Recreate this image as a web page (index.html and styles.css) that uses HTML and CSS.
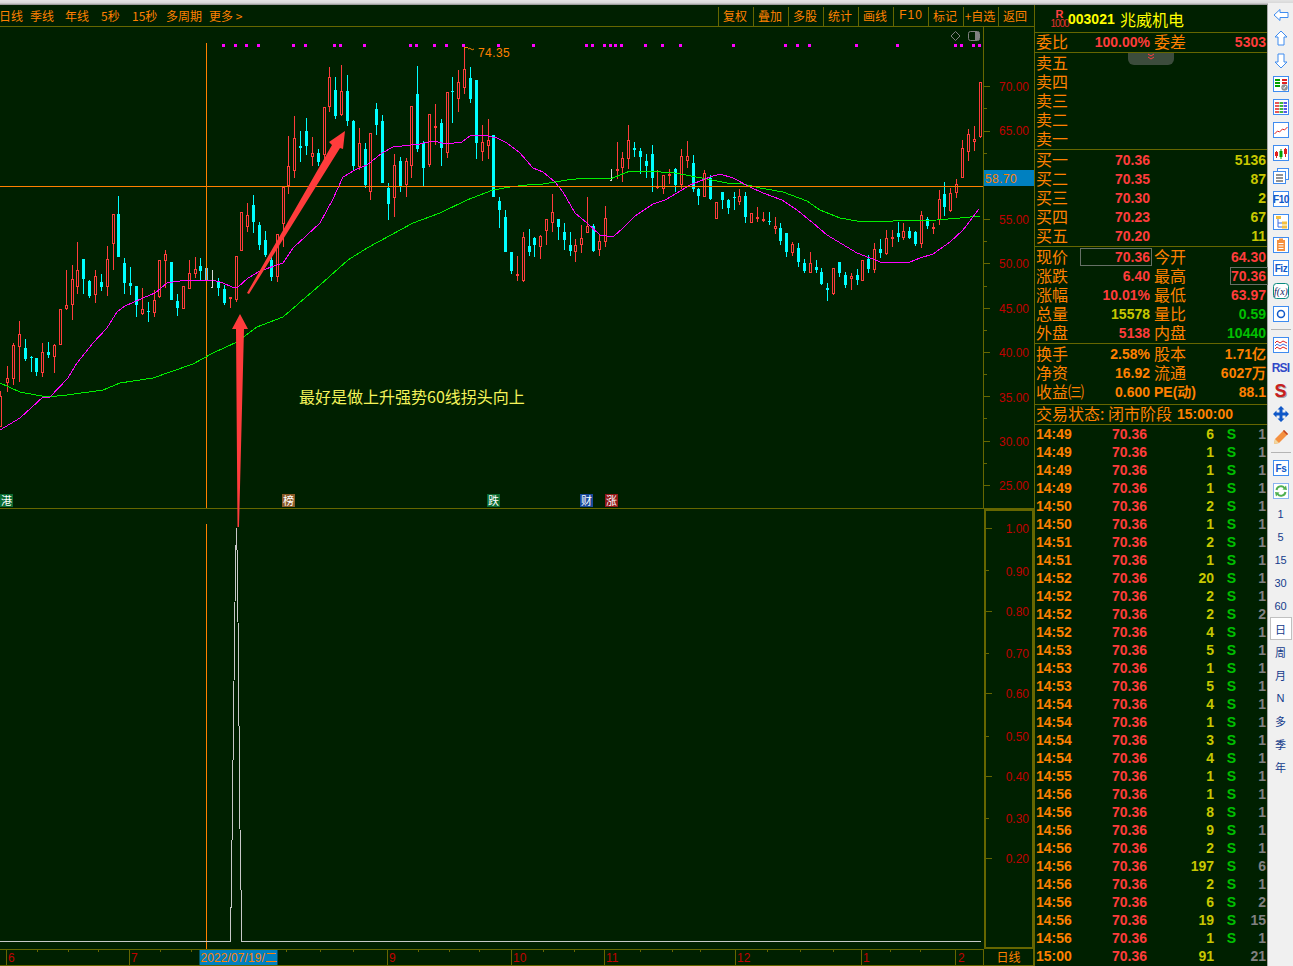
FILE: index.html
```html
<!DOCTYPE html>
<html lang="zh-CN">
<head>
<meta charset="utf-8">
<title>003021 兆威机电</title>
<link rel="stylesheet" href="styles.css">
</head>
<body>
<div class="topbar"></div>
<div class="app">
  <main class="main">
    <nav class="toolbar">
      <div class="periods">
        <span>日线</span><span>季线</span><span>年线</span><span>5秒</span><span>15秒</span><span>多周期</span><span>更多 &gt;</span>
      </div>
      <div class="actions">
        <span>复权</span><span>叠加</span><span>多股</span><span>统计</span><span>画线</span><span class="f10">F10</span><span>标记</span><span>+自选</span><span>返回</span>
      </div>
    </nav>
    <svg class="chart" viewBox="0 27 1034 939" width="1034" height="939">
      <g id="candles" class="crisp"></g>
      <path class="crisp hair-orange" d="M206.5 43V508M206.5 524V949"/>
      <polyline id="ma60" class="crisp ma-green" points=""/>
      <polyline id="ma20" class="crisp ma-pink" points=""/>
      <path class="crisp hair-orange" d="M0 186.5H984"/>
      <g id="dots" class="crisp"></g>

      <path class="peak-mark" d="M464.5 47V50M464.5 47.5H468M468 49q2-1.500 3 0t3 0"/>
      <text class="peak-label" x="478" y="57">74.35</text>

      <path class="corner-icon" d="M955.500 31.500l4.500 4.500-4.500 4.500-4.500-4.500z"/>
      <rect class="corner-icon" x="968.500" y="31.500" width="11" height="9" rx="2"/>
      <rect class="corner-fill" x="975" y="32" width="4" height="8"/>

      <!-- panel rules and axes -->
      <path class="crisp rule" d="M983.500 27V508M0 508.500H1034"/>
      <path class="crisp rule" d="M984 86.500h6M984 108.500h3M984 131.500h6M984 153.500h3M984 219.500h6M984 241.500h3M984 263.500h6M984 286.500h3M984 308.500h6M984 330.500h3M984 352.500h6M984 374.500h3M984 396.500h6M984 418.500h3M984 441.500h6M984 463.500h3M984 485.500h6"/>
      <text class="axis" x="1029" y="91">70.00</text>
      <text class="axis" x="1029" y="135">65.00</text>
      <text class="axis" x="1029" y="224">55.00</text>
      <text class="axis" x="1029" y="268">50.00</text>
      <text class="axis" x="1029" y="313">45.00</text>
      <text class="axis" x="1029" y="357">40.00</text>
      <text class="axis" x="1029" y="402">35.00</text>
      <text class="axis" x="1029" y="446">30.00</text>
      <text class="axis" x="1029" y="490">25.00</text>
      <rect class="price-tag" x="984" y="170" width="50" height="16"/>
      <text class="tag-text" x="985" y="183">58.70</text>

      <rect class="crisp axis-box" x="985" y="510" width="48" height="438"/>
      <path class="crisp rule" d="M986 528.500h6M986 570.500h3M986 611.500h6M986 653.500h3M986 693.500h6M986 736.500h3M986 776.500h6M986 818.500h3M986 858.500h6"/>
      <text class="axis" x="1029" y="533">1.00</text>
      <text class="axis" x="1029" y="576">0.90</text>
      <text class="axis" x="1029" y="616">0.80</text>
      <text class="axis" x="1029" y="658">0.70</text>
      <text class="axis" x="1029" y="698">0.60</text>
      <text class="axis" x="1029" y="741">0.50</text>
      <text class="axis" x="1029" y="781">0.40</text>
      <text class="axis" x="1029" y="823">0.30</text>
      <text class="axis" x="1029" y="863">0.20</text>

      <polyline class="crisp volume-line" points="0,941.500 230.500,941.500 230.500,907 231.500,907 231.500,880 235.500,563 236.500,528 237.500,570 240.500,880 241.500,900 241.500,941.500 981,941.500"/>

      <!-- event markers -->
      <rect class="mk-green" x="0" y="494" width="13" height="13"/><text class="mk-text" x="6.500" y="505">港</text>
      <rect class="mk-brown" x="282" y="494" width="13" height="13"/><text class="mk-text" x="288.500" y="505">榜</text>
      <rect class="mk-green" x="487" y="494" width="13" height="13"/><text class="mk-text" x="493.500" y="505">跌</text>
      <rect class="mk-blue" x="580" y="494" width="13" height="13"/><text class="mk-text" x="586.500" y="505">财</text>
      <rect class="mk-red" x="605" y="494" width="13" height="13"/><text class="mk-text" x="611.500" y="505">涨</text>

      <text class="note" x="299" y="403">最好是做上升强势60线拐头向上</text>

      <polygon class="arrow" points="247,293 332,145 329,142 345,131 343,149 340,148 249,294"/>
      <polygon class="arrow" points="237.500,527 236,329 232,329 240,314 248,329 244,329 239,527"/>

      <!-- time axis -->
      <path class="crisp rule" d="M0 949.500H984M0 965.500H1034M6.500 949V965M129.500 949V965M387.500 949V965M511.500 949V965M604.500 949V965M735.500 949V965M861.500 949V965M955.500 949V965M983.500 949V965M1033.500 949V965"/>
      <path class="crisp rule" d="M37.500 949v3M68.500 949v3M98.500 949v3M160.500 949v3M191.500 949v3M286.500 949v3M320.500 949v3M353.500 949v3M418.500 949v3M449.500 949v3M479.500 949v3M543.500 949v3M574.500 949v3M640.500 949v3M672.500 949v3M700.500 949v3M767.500 949v3M800.500 949v3M833.500 949v3M890.500 949v3M920.500 949v3"/>
      <text class="tick" x="8" y="962">6</text>
      <text class="tick" x="131" y="962">7</text>
      <text class="tick" x="389" y="962">9</text>
      <text class="tick" x="513" y="962">10</text>
      <text class="tick" x="606" y="962">11</text>
      <text class="tick" x="737" y="962">12</text>
      <text class="tick" x="863" y="962">1</text>
      <text class="tick" x="958" y="962">2</text>
      <rect class="price-tag" x="199.500" y="950" width="78" height="15"/>
      <text class="date-text" x="200.500" y="962">2022/07/19/二</text>
      <text class="period-text" x="1008.500" y="962">日线</text>
    </svg>
  </main>

  <aside class="quote">
    <header class="title">
      <div class="badge"><b>R</b><span>1000</span></div>
      <strong class="code">003021</strong>
      <span class="name">兆威机电</span>
    </header>
    <section class="block row4 ratio">
      <span>委比</span><b class="red">100.00%</b><span class="lab2">委差</span><b class="red">5303</b>
    </section>
    <section class="block book">
      <div class="fold"><svg width="12" height="8" viewBox="0 0 12 8"><path d="M3 1l3 2 3-2M3 4l3 2 3-2"/></svg></div>
      <div class="row2"><span>卖五</span></div>
      <div class="row2"><span>卖四</span></div>
      <div class="row2"><span>卖三</span></div>
      <div class="row2"><span>卖二</span></div>
      <div class="row2"><span>卖一</span></div>
    </section>
    <section class="block book">
      <div class="row2"><span>买一</span><b class="red">70.36</b><b class="yellow">5136</b></div>
      <div class="row2"><span>买二</span><b class="red">70.35</b><b class="yellow">87</b></div>
      <div class="row2"><span>买三</span><b class="red">70.30</b><b class="yellow">2</b></div>
      <div class="row2"><span>买四</span><b class="red">70.23</b><b class="yellow">67</b></div>
      <div class="row2"><span>买五</span><b class="red">70.20</b><b class="yellow">11</b></div>
    </section>
    <section class="block book">
      <div class="row4"><span>现价</span><b class="red boxed wide">70.36</b><span class="lab2">今开</span><b class="red">64.30</b></div>
      <div class="row4"><span>涨跌</span><b class="red">6.40</b><span class="lab2">最高</span><b class="red boxed narrow">70.36</b></div>
      <div class="row4"><span>涨幅</span><b class="red">10.01%</b><span class="lab2">最低</span><b class="red">63.97</b></div>
      <div class="row4"><span>总量</span><b class="yellow">15578</b><span class="lab2">量比</span><b class="green">0.59</b></div>
      <div class="row4"><span>外盘</span><b class="red">5138</b><span class="lab2">内盘</span><b class="green">10440</b></div>
    </section>
    <section class="block book extra">
      <div class="row4"><span>换手</span><b>2.58%</b><span class="lab2">股本</span><b>1.71亿</b></div>
      <div class="row4"><span>净资</span><b>16.92</b><span class="lab2">流通</span><b>6027万</b></div>
      <div class="row4"><span>收益㈢</span><b>0.600</b><span class="lab2 pe">PE(动)</span><b>88.1</b></div>
    </section>
    <section class="block status">
      <span>交易状态: 闭市阶段</span><b>15:00:00</b>
    </section>
    <section class="ticks" id="ticks"></section>
  </aside>

  <nav class="tools">
    <i class="tool"><svg class="ic" viewBox="0 0 16 16"><polygon class="ol" points="1,8 7,2.500 7,5.500 15,5.500 15,10.500 7,10.500 7,13.500"/></svg></i>
    <i class="tool"><svg class="ic" viewBox="0 0 16 16"><polygon class="ol" points="8,1 14,7 11,7 11,15 5,15 5,7 2,7"/></svg></i>
    <i class="tool"><svg class="ic" viewBox="0 0 16 16"><polygon class="ol" points="8,15 14,9 11,9 11,1 5,1 5,9 2,9"/></svg></i>
    <i class="tool"><svg class="ic" viewBox="0 0 16 16"><rect class="bx" x=".5" y=".5" width="15" height="15"/><path class="g2" d="M2 4h5M2 7h5M2 10h5"/><path class="r2" d="M9 4h5M9 7h5"/><circle class="gy" cx="11.500" cy="11.500" r="3.200"/><path class="wt" d="M10 11.500l1 1 2-2.500"/></svg></i>
    <i class="tool"><svg class="ic" viewBox="0 0 16 16"><rect class="bx" x=".5" y=".5" width="15" height="15"/><path class="r2 dash" d="M2 4h4M2 7h4M2 10h4M2 13h4"/><path class="g2 dash" d="M6.500 4h3.500M6.500 7h3.500M6.500 10h3.500M6.500 13h3.500"/><path class="b2 dash" d="M10.500 4h3.500M10.500 7h3.500M10.500 10h3.500M10.500 13h3.500"/></svg></i>
    <i class="tool"><svg class="ic" viewBox="0 0 16 16"><rect class="bx" x=".5" y=".5" width="15" height="15"/><path class="r1" d="M1.500 12l3-3 2 1 3-3 2 1 3-3"/></svg></i>
    <i class="tool"><svg class="ic" viewBox="0 0 16 16"><rect class="bx" x=".5" y=".5" width="15" height="15"/><path class="r1" d="M3.500 6v7M12.500 3v9"/><path class="g1" d="M8 4v10"/><rect class="fr" x="2" y="7" width="3" height="4"/><rect class="fg" x="6.500" y="6" width="3" height="6"/><rect class="fr" x="11" y="4" width="3" height="5"/></svg></i>
    <i class="tool"><svg class="ic" viewBox="0 0 16 16"><rect class="bx" x="4.500" y=".5" width="11" height="11"/><rect class="bx" x=".5" y="3.500" width="12" height="12"/><path class="gy1" d="M3 7h7M3 10h7M3 13h7"/></svg></i>
    <i class="tool"><svg class="ic" viewBox="0 0 16 16"><rect class="bx" x=".5" y=".5" width="15" height="15"/><text class="ic-t" x="8" y="12">F10</text></svg></i>
    <i class="tool"><svg class="ic" viewBox="0 0 16 16"><rect class="bx" x=".5" y=".5" width="15" height="15"/><path class="b1" d="M5 5v8h4M5 9h4"/><rect class="fy" x="3" y="2" width="5" height="3"/><rect class="fy" x="9" y="7.500" width="5" height="3"/><rect class="fy" x="9" y="11.500" width="5" height="3"/></svg></i>
    <i class="tool"><svg class="ic" viewBox="0 0 16 16"><rect class="bx" x=".5" y=".5" width="15" height="15"/><rect class="fo" x="4" y="3" width="8" height="11"/><rect class="fo" x="6" y="1.500" width="4" height="2"/><path class="wt" d="M5.500 6.500h5M5.500 9h5M5.500 11.500h5"/></svg></i>
    <i class="tool"><svg class="ic" viewBox="0 0 16 16"><rect class="bx" x=".5" y=".5" width="15" height="15"/><text class="ic-t" x="8" y="12">Fiz</text></svg></i>
    <i class="tool"><svg class="ic" viewBox="0 0 16 16"><rect class="bx teal" x=".5" y=".5" width="15" height="15" rx="3"/><text class="ic-f" x="8" y="12">f(x)</text></svg></i>
    <i class="tool"><svg class="ic" viewBox="0 0 16 16"><rect class="bx" x=".5" y=".5" width="15" height="15"/><circle class="b-ring" cx="8" cy="8" r="3.500"/></svg></i>
    <hr class="tool-sep">
    <i class="tool"><svg class="ic" viewBox="0 0 16 16"><rect class="bx" x=".5" y=".5" width="15" height="15"/><path class="r1" d="M2 6l2-2 3 2 3-2 4 2"/><path class="b1" d="M2 9l2-2 3 2 3-2 4 2"/><path class="r1" d="M2 12l2-2 3 2 3-2 4 2"/></svg></i>
    <i class="tool"><span class="rsi">RSI</span></i>
    <i class="tool"><span class="dollar">S</span></i>
    <i class="tool"><svg class="ic" viewBox="0 0 16 16"><path class="fb" d="M8 0l3.500 3.500H9.500v3H12.500V4.500L16 8l-3.500 3.500V9.500H9.500v3h2L8 16l-3.500-3.500h2v-3H3.500v2L0 8l3.500-3.500v2h3v-3h-2z"/></svg></i>
    <i class="tool"><svg class="ic" viewBox="0 0 16 16"><polygon class="fo" points="1,15 2,10 11,1 15,5 6,14"/><polygon class="pen-tip" points="1,15 2,10 6,14"/><polygon class="pen-end" points="10,2 11,1 15,5 14,6"/></svg></i>
    <hr class="tool-sep">
    <i class="tool"><svg class="ic" viewBox="0 0 16 16"><rect class="bx" x=".5" y=".5" width="15" height="15"/><text class="ic-t" x="8" y="12">Fs</text></svg></i>
    <i class="tool"><svg class="ic" viewBox="0 0 16 16"><rect class="bx pale" x=".5" y=".5" width="15" height="15"/><path class="g3" d="M3.500 7a4.500 4.500 0 0 1 8-2M12.500 9a4.500 4.500 0 0 1-8 2"/><polygon class="fg2" points="9.500,6.500 14,7 13,2.500"/><polygon class="fg2" points="6.500,9.500 2,9 3,13.500"/></svg></i>
    <span class="tool num">1</span>
    <span class="tool num">5</span>
    <span class="tool num">15</span>
    <span class="tool num">30</span>
    <span class="tool num">60</span>
    <span class="tool num cjk active">日</span>
    <span class="tool num cjk">周</span>
    <span class="tool num cjk">月</span>
    <span class="tool num">N</span>
    <span class="tool num cjk">多</span>
    <span class="tool num cjk">季</span>
    <span class="tool num cjk">年</span>
  </nav>
</div>
<script src="script.js"></script>
</body>
</html>
```
FILE: styles.css
```css
* { box-sizing: border-box; }
html, body { margin: 0; padding: 0; height: 100%; overflow: hidden; background: #f0f0f0; }
body { font-family: "Noto Sans CJK SC", "Liberation Sans", sans-serif; color: #ff8000; }

.topbar { height: 5px; background: linear-gradient(#e4e4e4 0, #d8d8d8 60%, #8a8a8a 100%); }
.app { display: flex; height: 961px; }

/* main chart */
.main { width: 1034px; background: #002000; display: flex; flex-direction: column; }
.toolbar {
  height: 22px; flex: none; display: flex; justify-content: space-between; align-items: flex-end;
  border-bottom: 1px solid #666600; font-size: 12px; line-height: 17px;
}
.periods { display: grid; grid-template-columns: 31px 35px 36px 31px 34px 43px auto; margin: 0 0 2px -1px; }
.periods span, .actions span { white-space: nowrap; }
.actions { display: flex; padding-right: 1px; }
.actions span { width: 35px; text-align: center; border-left: 1px solid #666600; height: 19px; padding-right: 2px; }
.actions .f10 { font-family: "Liberation Sans", sans-serif; letter-spacing: 1px; padding-right: 0; }
.chart { display: block; flex: none; background: #002000; }
.crisp { shape-rendering: crispEdges; }
.hair-orange { stroke: #ff8000; stroke-width: 1; fill: none; }
.rule { stroke: #666600; stroke-width: 1; fill: none; }
.axis-box { fill: none; stroke: #666600; stroke-width: 2; }
.ma-green { fill: none; stroke: #00ee00; stroke-width: 1; }
.ma-pink { fill: none; stroke: #ff00ff; stroke-width: 1; }
.volume-line { fill: none; stroke: #c8c8c8; stroke-width: 1; }
.c-up { fill: #ff3c3c; }
.c-body { fill: #002000; stroke: #ff3c3c; stroke-width: 1; }
.c-down { fill: #00ffff; }
.c-doji { fill: #d8d8d8; }
.c-sel { fill: #66ccff; }
.dot { fill: #ff00ff; }
.axis { font: 12px "Liberation Sans", sans-serif; fill: #c00000; text-anchor: end; }
.tick { font: 12px "Liberation Sans", sans-serif; fill: #c00000; }
.price-tag { fill: #0080c0; }
.tag-text, .date-text { font: 12px "Liberation Sans", sans-serif; fill: #ff8000; }
.tag-text { letter-spacing: .4px; }
.date-text { font-family: "Liberation Sans", "Noto Sans CJK SC", sans-serif; letter-spacing: .1px; }
.period-text { font: 12px "Noto Sans CJK SC", sans-serif; fill: #ff8000; text-anchor: middle; }
.peak-label { font: 12px "Liberation Sans", sans-serif; fill: #ff8000; letter-spacing: .4px; }
.peak-mark { fill: none; stroke: #ff8000; stroke-width: 1; }
.corner-icon { fill: none; stroke: #808080; stroke-width: 1; }
.corner-fill { fill: #808080; }
.arrow { fill: #ff3c3c; stroke: none; }
.note { font: 16px "Noto Sans CJK SC", sans-serif; fill: #f4f45a; }
.mk-text { font: 11px "Noto Sans CJK SC", sans-serif; fill: #ffffff; text-anchor: middle; }
.mk-green { fill: #0a6a30; }
.mk-brown { fill: #8a5a28; }
.mk-blue { fill: #1a4a9a; }
.mk-red { fill: #901818; }

/* quote panel */
.quote {
  width: 234px; flex: none; background: #002000; border-left: 1px solid #666600; border-right: 1px solid #a8a8a8;
  display: flex; flex-direction: column; font-size: 16px; line-height: 19px;
}
.quote b { font: bold 14px/19px "Liberation Sans", sans-serif; text-align: right; white-space: nowrap; color: #ff8000; }
.quote b.red { color: #ff3c3c; }
.quote b.yellow { color: #c8c800; }
.quote b.green { color: #00c000; }
.title { height: 28px; flex: none; display: flex; align-items: center; padding: 0 0 0 16px; border-bottom: 1px solid #666600; color: #ffff00; }
.badge { width: 17px; display: flex; flex-direction: column; align-items: center; color: #e03030; }
.quote .badge b { font: bold 11px/10px "Liberation Sans", sans-serif; color: #ff4040; }
.badge span { font: 10px/9px "Liberation Sans", sans-serif; letter-spacing: -1px; }
.code { font: bold 14px "Liberation Sans", sans-serif; width: 52px; }
.name { font-size: 16px; line-height: 20px; }
.block { border-bottom: 1px solid #666600; padding-left: 1px; flex: none; }
.row4 { display: grid; grid-template-columns: 32px 82px 36px 80px; height: 19px; white-space: nowrap; }
.row2 { display: grid; grid-template-columns: 32px 82px 116px; height: 19px; }
.row4 > span, .row2 > span { line-height: 17px; }
.ratio { height: 20px; }
.lab2 { padding-left: 4px; }
.row4 > .lab2.pe { font: bold 14px/19px "Liberation Sans", "Noto Sans CJK SC", sans-serif; }
.book { height: 97px; padding-top: 1px; position: relative; }
.extra { height: 61px; padding-top: 1px; }
.status { height: 20px; display: flex; gap: 5px; }
.status span { line-height: 17px; }
.status b { color: #ff8000; }
.boxed { outline: 1px solid #667066; outline-offset: -1px; justify-self: end; margin-right: -2px; padding-right: 2px; height: 18px; line-height: 18px !important; }
.boxed.wide { width: 72px; }
.boxed.narrow { width: 38px; }
.fold { position: absolute; top: 0; left: 93px; width: 46px; height: 12px; background: #3c4c3c; border-radius: 0 0 6px 6px; display: flex; justify-content: center; }
.fold path { fill: none; stroke: #ff3c3c; stroke-width: 1; }

.ticks { flex: 1; overflow: hidden; padding: 0 0 0 1px; }
.tick-row { display: grid; grid-template-columns: 76px 35px 67px 22px 30px; height: 18px; }
.quote .tick-row b { line-height: 18px; }
.quote .tick-row .t { color: #ff8000; text-align: left; }
.quote .tick-row .p { color: #ff3c3c; }
.quote .tick-row .v { color: #c8c800; }
.quote .tick-row .s { color: #00c000; }
.quote .tick-row .l { color: #808080; }

/* right toolbar */
.tools { width: 25px; flex: none; display: flex; flex-direction: column; align-items: center; background: #f0f0f0; margin-top: -2px; position: relative; }
.tool { height: 23px; width: 25px; flex: none; display: flex; align-items: center; justify-content: center; font-style: normal; }
.tool-sep { width: 20px; height: 1px; border: 0; background: #b4b4b4; margin: 4px 0 3px; flex: none; }
.ic { width: 16px; height: 16px; display: block; overflow: visible; }
.ol, .bx { fill: #fff; stroke: #3f8cf0; stroke-width: 1; }
.bx.teal { stroke: #0a8a80; }
.bx.pale { stroke: #8ab4f0; }
.g2 { stroke: #00a000; stroke-width: 2; fill: none; }
.r2 { stroke: #e02020; stroke-width: 2; fill: none; }
.b2 { stroke: #2020e0; stroke-width: 2; fill: none; }
.dash { stroke-width: 1.500; }
.gy { fill: #909090; }
.gy1 { stroke: #707070; stroke-width: 1.500; fill: none; }
.wt { stroke: #fff; stroke-width: 1; fill: none; }
.r1 { stroke: #e02020; stroke-width: 1; fill: none; }
.g1 { stroke: #00a000; stroke-width: 1; fill: none; }
.b1 { stroke: #3f6ce0; stroke-width: 1; fill: none; }
.fr { fill: #e02020; }
.fg { fill: #00a000; }
.fy { fill: #f4c040; }
.fo { fill: #f49040; }
.fb { fill: #1058c8; }
.g3 { stroke: #50b050; stroke-width: 2; fill: none; }
.fg2 { fill: #50b050; }
.b-ring { fill: none; stroke: #1058c8; stroke-width: 1.500; }
.pen-tip { fill: #f0d8a0; }
.pen-end { fill: #c04020; }
.ic-t { font: bold 10px "Liberation Sans", sans-serif; fill: #1058c8; text-anchor: middle; letter-spacing: -.4px; }
.ic-f { font: italic 10px "Liberation Serif", serif; fill: #102060; text-anchor: middle; }
.rsi { font: bold 12px "Liberation Sans", sans-serif; color: #3048c8; letter-spacing: -.8px; }
.dollar { font: bold 18px/18px "Liberation Sans", sans-serif; color: #c82020; text-shadow: 1px 1px 0 #a0a0a0; }
.num { font: 11px "Liberation Sans", sans-serif; color: #143c8c; }
.num.cjk { font: 11px "Noto Sans CJK SC", sans-serif; }
.active { background: #fff; border: 1px solid #c0c0c0; width: 22px; }
```
FILE: script.js
```js
// x, high, low, body top, body bottom, kind (r = up, c = down, w = doji, s = selected)
const candles = [
[0,391,427,396,427,'r'],[7,366,392,378,383,'r'],[13,343,385,345,379,'r'],[19,321,382,334,347,'r'],[25,339,361,348,359,'c'],[31,356,372,357,358,'c'],[36,358,376,358,372,'c'],[42,343,377,352,373,'r'],[48,342,358,352,355,'c'],[54,344,373,345,357,'r'],
[60,309,345,309,345,'r'],[66,270,310,305,309,'r'],[72,265,320,279,305,'r'],[77,242,294,270,287,'r'],[83,259,294,259,279,'c'],[89,280,298,281,296,'c'],[95,270,303,276,295,'r'],[101,274,291,282,287,'c'],[107,246,296,259,287,'r'],[113,214,270,214,244,'r'],
[118,196,257,214,257,'c'],[124,258,294,263,283,'c'],[130,267,295,283,286,'c'],[136,286,317,286,305,'c'],[142,288,315,309,314,'r'],[148,302,322,311,312,'c'],[154,290,317,300,313,'r'],[159,260,298,260,297,'r'],[165,250,288,254,261,'r'],[171,262,300,262,300,'c'],
[177,294,316,301,308,'c'],[183,286,309,286,309,'r'],[189,260,289,273,289,'r'],[195,257,278,269,274,'r'],[200,258,280,266,271,'c'],[206,267,286,268,281,'s'],[212,270,287,270,287,'w'],[218,278,296,281,288,'c'],[224,285,305,289,303,'c'],[230,297,308,297,299,'r'],
[236,256,302,256,300,'r'],[241,212,251,212,251,'r'],[247,203,232,215,227,'r'],[253,195,233,205,222,'c'],[259,222,250,225,245,'c'],[265,231,257,240,255,'c'],[271,257,281,260,277,'c'],[277,234,282,234,277,'r'],[283,187,247,187,224,'r'],[288,136,194,166,186,'r'],
[294,116,178,138,171,'r'],[300,131,162,146,148,'c'],[306,118,155,131,146,'c'],[312,137,166,153,157,'r'],[318,149,166,153,162,'c'],[324,107,160,107,155,'r'],[329,67,112,77,107,'r'],[335,77,119,90,116,'c'],[341,65,116,91,115,'r'],[347,75,126,91,121,'c'],
[353,120,170,121,166,'c'],[359,128,170,143,167,'r'],[365,143,188,149,185,'c'],[370,133,200,133,192,'r'],[376,103,135,109,125,'c'],[382,115,183,121,183,'c'],[388,183,220,188,204,'c'],[394,154,217,165,198,'r'],[400,157,192,161,187,'c'],[406,158,197,161,185,'r'],
[411,106,178,106,166,'r'],[417,66,152,94,149,'c'],[423,141,186,143,168,'c'],[429,114,167,114,165,'r'],[435,104,145,126,127,'r'],[441,119,166,123,148,'c'],[447,92,158,92,153,'r'],[452,77,123,91,92,'c'],[458,70,112,82,99,'r'],[464,47,94,69,88,'r'],
[470,67,103,78,99,'c'],[476,80,159,80,143,'c'],[482,125,161,142,152,'r'],[488,119,159,140,146,'r'],[493,135,197,135,197,'c'],[499,197,228,201,210,'c'],[505,210,252,217,252,'c'],[511,252,274,252,271,'c'],[517,256,281,274,276,'r'],
[523,232,282,237,281,'r'],[529,229,256,246,252,'c'],[534,237,257,238,245,'c'],[540,235,259,236,247,'r'],[546,219,245,219,231,'r'],[552,194,232,212,223,'r'],[558,219,240,219,227,'c'],[564,223,250,232,240,'c'],[570,232,256,245,251,'c'],[575,239,262,245,252,'r'],
[581,225,253,238,245,'r'],[587,197,233,226,233,'r'],[593,224,252,226,251,'c'],[599,235,256,241,250,'r'],[605,206,247,218,242,'r'],[611,169,180,169,180,'w'],[617,142,179,169,171,'r'],[622,152,182,158,168,'r'],[628,125,169,140,159,'r'],[634,142,157,148,150,'c'],
[640,148,174,151,157,'c'],[646,154,178,161,166,'c'],[652,145,192,154,178,'c'],[657,170,189,186,188,'r'],[663,175,194,175,189,'r'],[669,169,184,174,176,'r'],[675,168,192,169,185,'c'],[681,149,189,156,185,'r'],[687,141,168,156,161,'r'],[693,155,192,163,189,'c'],
[698,188,205,189,196,'c'],[704,170,197,173,197,'r'],[710,175,200,178,199,'c'],[716,202,219,202,219,'r'],[722,192,209,192,200,'c'],[728,199,214,200,208,'c'],[734,192,210,197,198,'c'],[739,189,205,196,202,'r'],[745,192,223,196,217,'c'],[751,213,223,213,223,'r'],
[757,207,222,217,219,'r'],[763,212,222,219,220,'r'],[769,212,225,221,222,'c'],[775,217,234,226,229,'r'],[780,223,245,228,241,'c'],[786,233,257,233,252,'c'],[792,242,256,244,253,'r'],[798,243,267,248,262,'c'],[804,259,273,263,271,'c'],[810,252,273,263,273,'r'],
[816,260,273,267,270,'c'],[821,268,285,272,284,'c'],[827,283,301,288,290,'c'],[833,268,295,268,294,'r'],[839,262,277,262,273,'c'],[845,272,288,275,285,'c'],[851,273,290,276,279,'r'],[857,269,285,275,280,'c'],[862,260,281,260,281,'r'],[868,255,273,259,269,'c'],
[874,243,273,249,270,'r'],[880,239,258,249,253,'c'],[886,230,255,238,254,'r'],[892,230,247,237,239,'r'],[898,222,242,233,237,'c'],[903,223,240,231,238,'r'],[909,227,239,231,238,'c'],[915,231,246,232,244,'c'],[921,211,248,215,244,'r'],[927,217,229,219,226,'c'],
[933,223,234,227,229,'r'],[939,190,225,199,220,'r'],[944,182,216,194,207,'c'],[950,188,212,193,211,'r'],[956,179,198,184,193,'r'],[962,140,178,148,178,'r'],[968,129,161,134,152,'r'],[974,126,151,139,142,'r'],[980,82,138,82,137,'r']
];

const ma20 = "0,430 20,418 43,397 50,397 68,378 77,363 93,343 107,328 117,312 125,306 143,298 155,293 167,283 180,281 213,280 223,283 232,287 238,287 248,278 260,271 283,263 293,248 320,223 333,199 343,177 355,170 367,165 382,153 393,147 420,144 433,141 447,144 462,142 470,136 483,135 497,138 507,143 520,153 533,168 543,172 555,182 563,192 575,213 587,223 600,235 613,237 623,228 635,216 653,204 665,200 677,193 690,185 710,177 720,174 733,178 750,187 763,193 782,200 797,210 813,223 827,235 857,253 883,263 910,262 920,258 933,254 950,242 963,230 979,209";
const ma60 = "0,383 20,392 47,397 67,395 103,390 120,383 153,378 173,371 193,364 213,353 237,342 257,327 283,317 320,285 348,260 367,248 413,223 440,213 467,200 493,190 510,187 527,185 543,184 567,180 585,178 610,179 630,171 647,171 675,173 707,179 727,183 743,184 760,188 783,192 807,201 820,210 840,218 857,221 873,222 893,221 937,220 960,218 980,216";
const dots = [223,235,246,258,293,305,334,340,364,410,416,434,446,463,498,533,586,592,604,610,615,621,645,662,680,733,785,797,809,856,897,955,961,973,979];

const ticks = [
["14:49",6,"S",1],["14:49",1,"S",1],["14:49",1,"S",1],["14:49",1,"S",1],["14:50",2,"S",1],["14:50",1,"S",1],["14:51",2,"S",1],["14:51",1,"S",1],["14:52",20,"S",1],["14:52",2,"S",1],
["14:52",2,"S",2],["14:52",4,"S",1],["14:53",5,"S",1],["14:53",1,"S",1],["14:53",5,"S",1],["14:54",4,"S",1],["14:54",1,"S",1],["14:54",3,"S",1],["14:54",4,"S",1],["14:55",1,"S",1],
["14:56",1,"S",1],["14:56",8,"S",1],["14:56",9,"S",1],["14:56",2,"S",1],["14:56",197,"S",6],["14:56",2,"S",1],["14:56",6,"S",2],["14:56",19,"S",15],["14:56",1,"S",1],["15:00",91,"",21]
];

const NS = "http://www.w3.org/2000/svg";
function rect(parent, x, y, w, h, cls) {
  const r = document.createElementNS(NS, "rect");
  r.setAttribute("x", x); r.setAttribute("y", y);
  r.setAttribute("width", w); r.setAttribute("height", h);
  r.setAttribute("class", cls);
  parent.appendChild(r);
}

const g = document.getElementById("candles");
const fills = { r: "c-up", c: "c-down", w: "c-doji", s: "c-sel" };
for (const [x, hi, lo, top, bot, k] of candles) {
  rect(g, x, hi, 1, lo - hi, fills[k]);
  if (k === "r") rect(g, x - 0.5, top + 0.5, 2, Math.max(bot - top - 1, 1), "c-body");
  else if (k === "w") rect(g, x - 1, bot, 2, 1, "c-doji");
  else rect(g, x - 1, top, 3, Math.max(bot - top, 1), fills[k]);
}
document.getElementById("ma20").setAttribute("points", ma20);
document.getElementById("ma60").setAttribute("points", ma60);
const d = document.getElementById("dots");
for (const x of dots) rect(d, x - 1, 44, 3, 3, "dot");

const list = document.getElementById("ticks");
for (const [t, v, s, l] of ticks) {
  const row = document.createElement("div");
  row.className = "tick-row";
  for (const [cls, text] of [["t", t], ["p", "70.36"], ["v", v], ["s", s], ["l", l]]) {
    const b = document.createElement("b");
    b.className = cls;
    b.textContent = text;
    row.appendChild(b);
  }
  list.appendChild(row);
}
```
